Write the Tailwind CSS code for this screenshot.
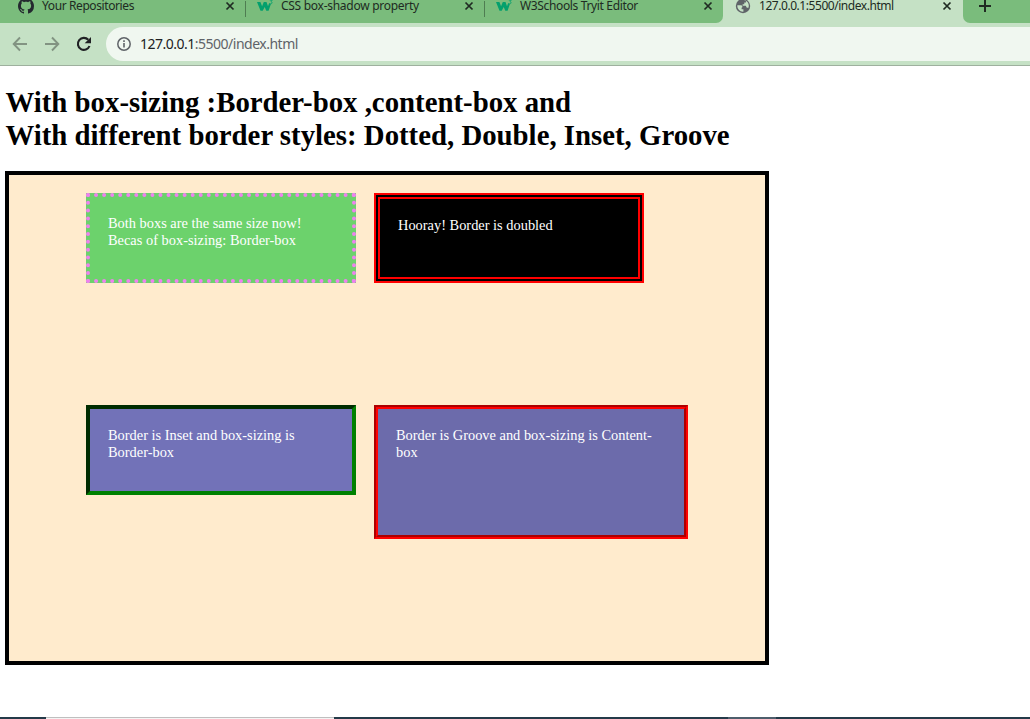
<!DOCTYPE html>
<html lang="en">
<head>
<meta charset="utf-8">
<title>127.0.0.1:5500/index.html</title>
<script src="https://cdn.jsdelivr.net/npm/@tailwindcss/browser@4"></script>
</head>
<body class="w-[1030px] h-[719px] overflow-hidden bg-white flex flex-col">
<svg class="hidden">
  <symbol id="close" viewBox="0 0 10 10"><path d="M1.500 1.500l7 7M8.500 1.500l-7 7" stroke="#1f2a22" stroke-width="1.700" fill="none"/></symbol>
  <symbol id="w3" viewBox="0 0 17 14"><path d="M0 3h3.400l1.700 4.300L6.800 3h2.700l1.500 4.300L12.200 4l1.700 1-2.300 6.700H9.300L7.700 8l-2 3.700H3.500z" fill="#04a06d"/><path d="M12.800 1.200h2.400l-1.200 1.500c1.700.1 1.400 2.500-.7 2" stroke="#04a06d" stroke-width=".8" fill="none"/></symbol>
</svg>
<header class="h-[66px] shrink-0 bg-[#c5e1c5] border-b border-[#9eb09e] flex flex-col font-['Noto_Sans','Open_Sans',sans-serif]">
  <div class="h-[23px] flex text-[12px] leading-[12px] text-[#202b22]">
    <div class="w-[723px] h-[23px] bg-[#7abc7c] rounded-br-[7px] flex">
      <div class="w-[246px] h-[12px] flex items-center pl-[18px]">
        <svg class="w-4 h-4 shrink-0" viewBox="0 0 16 16"><path fill="#24292f" d="M8 0C3.58 0 0 3.58 0 8c0 3.54 2.29 6.53 5.47 7.59.4.07.55-.17.55-.38 0-.19-.01-.82-.01-1.49-2.01.37-2.53-.49-2.69-.94-.09-.23-.48-.94-.82-1.13-.28-.15-.68-.52-.01-.53.63-.01 1.08.58 1.23.82.72 1.21 1.87.87 2.33.66.07-.52.28-.87.51-1.07-1.78-.2-3.64-.89-3.64-3.95 0-.87.31-1.59.82-2.15-.08-.2-.36-1.02.08-2.12 0 0 .67-.21 2.2.82.64-.18 1.32-.27 2-.27s1.36.09 2 .27c1.53-1.04 2.2-.82 2.2-.82.44 1.1.16 1.92.08 2.12.51.56.82 1.27.82 2.15 0 3.07-1.87 3.75-3.65 3.95.29.25.54.73.54 1.48 0 1.07-.01 1.93-.01 2.2 0 .21.15.46.55.38A8.01 8.01 0 0 0 16 8c0-4.42-3.58-8-8-8z"/></svg>
        <span class="ml-2 w-[183px] whitespace-nowrap tracking-[-0.4px]">Your Repositories</span>
        <svg class="w-[10px] h-[10px] shrink-0"><use href="#close"/></svg>
        <span class="ml-auto w-px h-[16px] mt-[5px] bg-[#4f7d52]"></span>
      </div>
      <div class="w-[239px] h-[12px] flex items-center pl-[11px]">
        <svg class="w-[17px] h-[14px] shrink-0"><use href="#w3"/></svg>
        <span class="ml-[7px] w-[183px] whitespace-nowrap tracking-[-0.28px]">CSS box-shadow property</span>
        <svg class="w-[10px] h-[10px] shrink-0"><use href="#close"/></svg>
        <span class="ml-auto w-px h-[16px] mt-[5px] bg-[#4f7d52]"></span>
      </div>
      <div class="w-[238px] h-[12px] flex items-center pl-[11px]">
        <svg class="w-[17px] h-[14px] shrink-0"><use href="#w3"/></svg>
        <span class="ml-[7px] w-[183px] whitespace-nowrap tracking-[-0.35px]">W3Schools Tryit Editor</span>
        <svg class="w-[10px] h-[10px] shrink-0"><use href="#close"/></svg>
      </div>
    </div>
    <div class="w-[240px] h-[12px] flex items-center pl-[12px]">
      <svg class="w-[16px] h-[16px] shrink-0" viewBox="0 0 16 16"><circle cx="8" cy="8" r="7.200" fill="#5f6368"/><path d="M2.300 7.300h3.500c1.800 0 2.200 2.200.8 2.500v1.400h1.800v2.500C5 14 2.100 11 2.300 7.300zM9 2.300c4 .6 5.600 4.500 4.500 7.400h-1.700l-1-1.900H7.600V6.200h1.700V4.600H11V3.200z" fill="#c5e1c5"/></svg>
      <span class="ml-2 w-[183px] whitespace-nowrap tracking-[-0.45px]">127.0.0.1:5500/index.html</span>
      <svg class="w-[10px] h-[10px] shrink-0"><use href="#close"/></svg>
    </div>
    <div class="flex-1 h-[23px] bg-[#7abc7c] rounded-bl-[7px] pl-[15px]">
      <svg class="w-[14px] h-[13px]" viewBox="0 0 14 13"><path d="M1 6h12M7 0v12" stroke="#202b22" stroke-width="2"/></svg>
    </div>
  </div>
  <div class="h-[42px] flex items-center pl-[12px]">
    <svg class="w-4 h-4 shrink-0" viewBox="0 0 16 16"><path d="M15 8H2M8 1.500L1.700 8 8 14.500" fill="none" stroke="#829382" stroke-width="1.900"/></svg>
    <svg class="w-4 h-4 ml-4 shrink-0" viewBox="0 0 16 16"><path d="M1 8h13M8 1.500L14.300 8 8 14.500" fill="none" stroke="#829382" stroke-width="1.900"/></svg>
    <svg class="w-4 h-4 ml-4 shrink-0" viewBox="0 0 16 16"><path d="M13.500 10A6 6 0 1 1 12.300 3.800" fill="none" stroke="#202124" stroke-width="2.100"/><path d="M15 1v6.300H8.700z" fill="#202124"/></svg>
    <div class="ml-[14px] flex-1 h-[34px] bg-[#f0f7f0] rounded-l-full flex items-center pl-[11px]">
      <svg class="w-[14px] h-[14px] shrink-0" viewBox="0 0 14 14"><circle cx="7" cy="7" r="6.200" fill="none" stroke="#5f6368" stroke-width="1.500"/><path d="M7 6v4.500M7 3.300v1.700" stroke="#5f6368" stroke-width="1.600"/></svg>
      <span class="ml-[9px] text-[14px] leading-[20px] text-[#5f6368] whitespace-nowrap tracking-[-0.5px]"><span class="text-[#202124]">127.0.0.1</span>:5500/index.html</span>
    </div>
  </div>
</header>
<main class="flex-1 pl-[5px] pt-[20px] font-['Liberation_Serif',serif]">
  <h1 class="pl-[0.5px] text-[28.8px] leading-[33px] font-bold text-black">With box-sizing :Border-box ,content-box and<br>With different border styles: Dotted, Double, Inset, Groove</h1>
  <section class="mt-[19px] w-[764px] h-[494px] bg-[#ffebcd] border-4 border-black pl-[77px] pt-[18px] text-[14.4px] leading-[17px] text-white">
    <div class="flex gap-[18px] h-[212px] items-start">
      <div class="w-[270px] h-[90px] bg-[#6cd26c] border-4 border-dotted border-[#ee82ee] p-[18px]">Both boxs are the same size now! Becas of box-sizing: Border-box</div>
      <div class="w-[270px] h-[90px] bg-black border-[6px] border-double border-[#ff0000] p-[18px]">Hooray! Border is doubled</div>
    </div>
    <div class="flex gap-[18px] items-start">
      <div class="w-[270px] h-[90px] bg-[#7272b8] border-4 border-[green] [border-style:inset] p-[18px]">Border is Inset and box-sizing is Border-box</div>
      <div class="box-content w-[270px] h-[90px] bg-[#6c6bab] border-4 border-[#ff0000] [border-style:groove] p-[18px]">Border is Groove and box-sizing is Content-box</div>
    </div>
  </section>
</main>
<footer class="h-[2px] shrink-0 flex bg-[#243a49]">
  <div class="ml-[46px] w-[288px] bg-[#f4f4f4] border-t border-[#bfbfbf]"></div>
  <div class="ml-[394px] w-[48px] bg-[#4e5e6c]"></div>
</footer>
</body>
</html>
